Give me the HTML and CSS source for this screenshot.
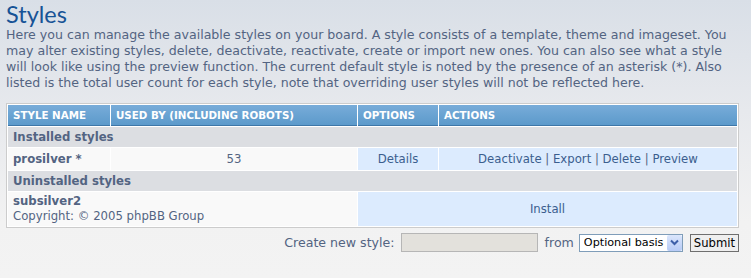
FILE: index.html
```html
<!DOCTYPE html>
<html lang="en">
<head>
    <meta charset="UTF-8">
    <title>Styles</title>
    <link rel="stylesheet" href="styles.css">
</head>
<body>
    <h1>Styles</h1>
    <p class="intro">Here you can manage the available styles on your board. A style consists of a template, theme and imageset. You may alter existing styles, delete, deactivate, reactivate, create or import new ones. You can also see what a style will look like using the preview function. The current default style is noted by the presence of an asterisk (*). Also listed is the total user count for each style, note that overriding user styles will not be reflected here.</p>

    <table class="styles-table">
        <colgroup>
            <col class="c-name">
            <col class="c-used">
            <col class="c-opts">
            <col class="c-acts">
        </colgroup>
        <thead>
            <tr>
                <th>Style name</th>
                <th>Used by (including robots)</th>
                <th>Options</th>
                <th>Actions</th>
            </tr>
        </thead>
        <tbody>
            <tr class="group"><td colspan="4">Installed styles</td></tr>
            <tr class="row">
                <td class="name"><strong>prosilver *</strong></td>
                <td class="center">53</td>
                <td class="center blue"><a href="#">Details</a></td>
                <td class="center blue"><a href="#">Deactivate</a> | <a href="#">Export</a> | <a href="#">Delete</a> | <a href="#">Preview</a></td>
            </tr>
            <tr class="group"><td colspan="4">Uninstalled styles</td></tr>
            <tr class="row tall">
                <td colspan="2" class="name"><strong>subsilver2</strong><br>Copyright: &copy; 2005 phpBB Group</td>
                <td colspan="2" class="center blue"><a href="#">Install</a></td>
            </tr>
        </tbody>
    </table>

    <form class="create-form">
        <label for="style_name">Create new style:</label>
        <input type="text" id="style_name" class="text-input">
        <span>from</span>
        <span class="select-wrap">
            <select class="basis">
                <option>Optional basis</option>
            </select>
            <span class="select-arrow">
                <svg width="9" height="7" viewBox="0 0 9 7"><path d="M1 1.5 L4.5 5 L8 1.5" fill="none" stroke="#3d5fa8" stroke-width="2"/></svg>
            </span>
        </span>
        <button type="button" class="submit">Submit</button>
    </form>
</body>
</html>
```

FILE: styles.css
```css
body {
    margin: 0;
    padding: 0 6px;
    height: 278px;
    font-family: Verdana, "DejaVu Sans", sans-serif;
    font-size: 12.6px;
    color: #536482;
    background: linear-gradient(to bottom, #d9dfe7 0%, #e7e9ed 40%, #f2f2f2 80%, #f3f3f3 100%);
    overflow: hidden;
}
h1 {
    margin: 0;
    padding: 0;
    font-family: Lato, "Open Sans", sans-serif;
    font-weight: 400;
    font-size: 23.5px;
    line-height: 28px;
    color: #175396;
}
.intro {
    margin: -1px 0 12px;
    line-height: 16px;
    font-size: 12.6px;
}
.styles-table {
    width: 733px;
    table-layout: fixed;
    border: 1px solid #cccccc;
    background-color: #ffffff;
    border-spacing: 1px;
}
.c-name { width: 102px; }
.c-used { width: 246px; }
.c-opts { width: 80px; }
.c-acts { width: auto; }
th {
    height: 20px;
    padding: 0 5px;
    text-align: left;
    text-transform: uppercase;
    font-size: 10.3px;
    font-weight: bold;
    color: #ffffff;
    background: linear-gradient(to bottom, #78acd9 0%, #5c9acb 100%);
    border-bottom: 1px solid #3e77a8;
}
td {
    padding: 0 5px;
    font-size: 11.7px;
}
.group td {
    height: 20px;
    font-weight: bold;
    font-size: 11.7px;
    background-color: #dcdee2;
}
.row td {
    height: 22px;
    background-color: #f9f9f9;
}
.row.tall td {
    height: 34px;
    line-height: 15px;
}
.row td.blue {
    background-color: #dcebfe;
}
.name strong {
    font-size: 11.7px;
}
.center {
    text-align: center;
}
a {
    color: #3b5e8e;
    text-decoration: none;
}
.create-form {
    display: flex;
    justify-content: flex-end;
    align-items: center;
    gap: 6px;
    width: 733px;
    margin-top: 5px;
    font-size: 12.6px;
}
.text-input {
    width: 135px;
    height: 17px;
    padding: 0;
    margin: 0 1px 0 0;
    border: 1px solid #b6b6b6;
    background-color: #e3e1dc;
}
.select-wrap {
    position: relative;
    display: inline-block;
    margin-left: -1px;
}
.basis {
    -webkit-appearance: none;
    appearance: none;
    width: 104px;
    height: 18px;
    padding: 0 0 0 4px;
    border: 1px solid #7f9db9;
    background-color: #ffffff;
    font-family: Verdana, "DejaVu Sans", sans-serif;
    font-size: 11.2px;
    color: #000000;
}
.select-arrow {
    position: absolute;
    right: 1px;
    top: 1px;
    width: 15px;
    height: 16px;
    display: flex;
    align-items: center;
    justify-content: center;
    background: linear-gradient(to bottom, #dbe6fc, #b7cbf6);
    border-radius: 2px;
    pointer-events: none;
}
.submit {
    height: 18px;
    padding: 0 3px;
    margin-left: 1px;
    font-family: Verdana, "DejaVu Sans", sans-serif;
    font-size: 11.6px;
    color: #000000;
    background-color: #efefef;
    border: 1px solid #6f6f6f;
    border-radius: 0;
}
```
